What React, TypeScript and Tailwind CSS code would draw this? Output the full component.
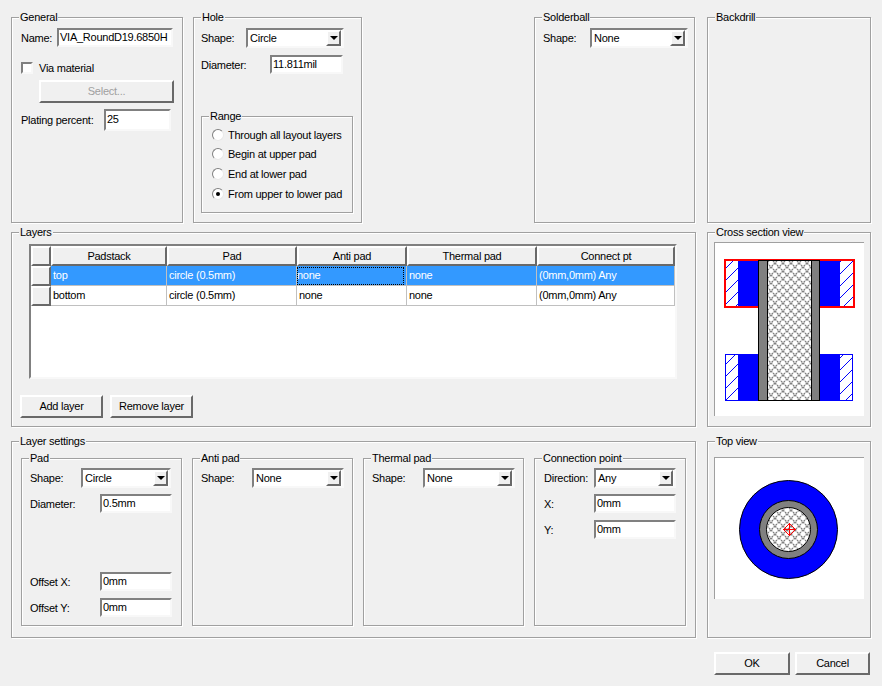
import React from "react";

const sunken = "border-2 border-t-[#808080] border-l-[#808080] border-r-[#f8f8f8] border-b-[#f8f8f8] bg-white";
const raised = "border-2 border-t-white border-l-white border-r-[#696969] border-b-[#696969] bg-[#f0f0f0]";

function Group({ label, className, children }: { label: string; className: string; children?: React.ReactNode }) {
  return (
    <div className={`relative shrink-0 border border-[#a0a0a0] shadow-[1px_1px_0_#fff,inset_1px_1px_0_#fff] ${className}`}>
      <span className="absolute -top-[8px] left-[7px] bg-[#f0f0f0] px-[1px] leading-[14px] whitespace-nowrap">{label}</span>
      {children}
    </div>
  );
}

function TextBox({ value, className }: { value: string; className: string }) {
  return (
    <div className={`${sunken} shrink-0 pl-[1px] leading-[14px] whitespace-nowrap overflow-hidden ${className}`}>{value}</div>
  );
}

function Combo({ value, className }: { value: string; className: string }) {
  return (
    <div className={`${sunken} shrink-0 h-[20px] flex items-center justify-between pl-[2px] pr-[1px] ${className}`}>
      <span>{value}</span>
      <span className={`${raised} w-[15px] h-[16px] flex items-center justify-center border`}>
        <span className="w-0 h-0 border-x-[4px] border-x-transparent border-t-[4px] border-t-black" />
      </span>
    </div>
  );
}

function Radio({ label, checked }: { label: string; checked?: boolean }) {
  return (
    <div className="flex items-center h-[19.67px]">
      <span className="w-[12px] h-[12px] rounded-full border border-t-[#808080] border-l-[#808080] border-r-[#e8e8e8] border-b-[#e8e8e8] bg-white flex items-center justify-center">
        {checked && <span className="w-[4px] h-[4px] rounded-full bg-black" />}
      </span>
      <span className="ml-[4px] whitespace-nowrap">{label}</span>
    </div>
  );
}

function Button({ label, disabled, className }: { label: string; disabled?: boolean; className: string }) {
  return (
    <div className={`${raised} shrink-0 flex items-center justify-center pb-[1px] ${disabled ? "text-[#a0a0a0]" : ""} ${className}`}>{label}</div>
  );
}

const columns = "grid grid-cols-[20px_116px_130px_110px_130px_138px]";

function HeaderCell({ label }: { label?: string }) {
  return <div className={`${raised} h-[20px] flex items-center justify-center pb-[1px]`}>{label}</div>;
}

function Cell({ value, selected, focused }: { value: string; selected?: boolean; focused?: boolean }) {
  return (
    <div className={`h-[20px] border-r border-b border-[#c0c0c0] pl-[2px] flex items-center whitespace-nowrap ${focused ? "" : "pb-[1px]"} ${selected ? "bg-[#3399ff] text-white" : "bg-white"}`}>
      {focused ? (
        <span className="-ml-[2px] w-full h-[18px] pb-[1px] flex items-center outline-1 -outline-offset-1 outline-dotted outline-black">{value}</span>
      ) : (
        value
      )}
    </div>
  );
}

function Row({ name, selected }: { name: string; selected?: boolean }) {
  return (
    <div className={columns}>
      <HeaderCell />
      <Cell value={name} selected={selected} />
      <Cell value="circle (0.5mm)" selected={selected} />
      <Cell value="none" selected={selected} focused={selected} />
      <Cell value="none" selected={selected} />
      <Cell value="(0mm,0mm) Any" selected={selected} />
    </div>
  );
}

function Hatches() {
  const diag = [0, 1, 2, 3, 4, 5, 6, 7, 8, 9, 10, 11];
  return (
    <defs>
      <pattern id="cross" width="8" height="8" patternUnits="userSpaceOnUse">
        <path d="M0 0L8 8M8 0L0 8" stroke="#808080" strokeWidth="1.3" strokeDasharray="2 0.83" fill="none" shapeRendering="auto" />
      </pattern>
      <pattern id="blueDiag" width="12" height="12" patternUnits="userSpaceOnUse">
        {diag.map((i) => (
          <rect key={i} x={i} y={11 - i} width="1" height="1" fill="#0000ff" />
        ))}
      </pattern>
    </defs>
  );
}

// panel content starts at 715,243
function CrossSection() {
  return (
    <svg width="149" height="173" shapeRendering="crispEdges">
      <Hatches />
      <rect x="10" y="111" width="127" height="46" fill="url(#blueDiag)" stroke="#0000ff" />
      <rect x="23" y="111" width="20" height="46" fill="#0000ff" />
      <rect x="105" y="111" width="20" height="46" fill="#0000ff" />
      <rect x="10" y="18" width="129" height="46" fill="url(#blueDiag)" />
      <rect x="23" y="18" width="20" height="46" fill="#0000ff" />
      <rect x="105" y="18" width="20" height="46" fill="#0000ff" />
      <rect x="10" y="17" width="129" height="47" fill="none" stroke="#ff0000" strokeWidth="2" />
      <rect x="43" y="17" width="61" height="140" fill="#808080" stroke="#000000" />
      <rect x="52" y="17" width="44" height="140" fill="#ffffff" stroke="#000000" />
      <rect x="53" y="18" width="43" height="139" fill="url(#cross)" />
    </svg>
  );
}

function TopView() {
  const cx = 73.5;
  const cy = 71.5;
  return (
    <svg width="149" height="141">
      <Hatches />
      <circle cx={cx} cy={cy} r="49" fill="#0000ff" stroke="#000000" />
      <circle cx={cx} cy={cy} r="29" fill="#808080" stroke="#000000" />
      <circle cx={cx} cy={cy} r="22" fill="#ffffff" stroke="#000000" />
      <circle cx={cx} cy={cy} r="21.5" fill="url(#cross)" />
      <path d="M68 71.5h13M74.5 65v13" stroke="#ff0000" fill="none" shapeRendering="crispEdges" />
      <path d="M74.5 65.5l6 6-6 6-6-6z" stroke="#ff0000" fill="none" />
    </svg>
  );
}

export default function App() {
  return (
    <div className="w-[882px] h-[686px] overflow-hidden bg-[#f0f0f0] pt-[17px] pl-[11px] text-[11px] leading-[14px] tracking-[-0.25px] text-black font-['Liberation_Sans',sans-serif]">
      <div className="flex">
        <Group label="General" className="w-[172px] h-[206px]">
          <div className="ml-[9px] mt-[10px] flex items-center">
            <span className="w-[36px]">Name:</span>
            <TextBox value="VIA_RoundD19.6850H" className="w-[116px] h-[19px]" />
          </div>
          <div className="ml-[9px] mt-[15px] flex items-center h-[12px]">
            <span className={`${sunken} w-[12px] h-[12px] border`} />
            <span className="ml-[6px]">Via material</span>
          </div>
          <Button label="Select..." disabled className="ml-[27px] mt-[6px] w-[135px] h-[23px]" />
          <div className="ml-[9px] mt-[6px] flex items-center">
            <span className="w-[83px]">Plating percent:</span>
            <TextBox value="25" className="w-[67px] h-[22px] pt-[1px]" />
          </div>
        </Group>

        <Group label="Hole" className="ml-[10px] w-[169px] h-[206px]">
          <div className="ml-[7px] mt-[10px] flex items-center">
            <span className="w-[45px]">Shape:</span>
            <Combo value="Circle" className="w-[98px]" />
          </div>
          <div className="ml-[7px] mt-[7px] flex items-center">
            <span className="w-[69px]">Diameter:</span>
            <TextBox value="11.811mil" className="w-[73px] h-[19px]" />
          </div>
          <Group label="Range" className="ml-[7px] mt-[42px] w-[152px] h-[97px]">
            <div className="ml-[10px] mt-[8px]">
              <Radio label="Through all layout layers" />
              <Radio label="Begin at upper pad" />
              <Radio label="End at lower pad" />
              <Radio label="From upper to lower pad" checked />
            </div>
          </Group>
        </Group>

        <Group label="Solderball" className="ml-[172px] w-[161px] h-[206px]">
          <div className="ml-[8px] mt-[10px] flex items-center">
            <span className="w-[47px]">Shape:</span>
            <Combo value="None" className="w-[98px]" />
          </div>
        </Group>

        <Group label="Backdrill" className="ml-[12px] w-[164px] h-[206px]" />
      </div>

      <div className="flex mt-[9px]">
        <Group label="Layers" className="w-[685px] h-[195px]">
          <div className={`${sunken} ml-[17px] mt-[11px] w-[648px] h-[135px]`}>
            <div className={columns}>
              <HeaderCell />
              <HeaderCell label="Padstack" />
              <HeaderCell label="Pad" />
              <HeaderCell label="Anti pad" />
              <HeaderCell label="Thermal pad" />
              <HeaderCell label="Connect pt" />
            </div>
            <Row name="top" selected />
            <Row name="bottom" />
          </div>
          <div className="ml-[8px] mt-[16px] flex gap-[7px]">
            <Button label="Add layer" className="w-[83px] h-[23px]" />
            <Button label="Remove layer" className="w-[83px] h-[23px]" />
          </div>
        </Group>

        <Group label="Cross section view" className="ml-[11px] w-[164px] h-[195px]">
          <div className="ml-[6px] mt-[9px] w-[150px] h-[174px] bg-white border-t border-l border-[#a0a0a0]">
            <CrossSection />
          </div>
        </Group>
      </div>

      <div className="flex mt-[14px]">
        <Group label="Layer settings" className="w-[685px] h-[197px] flex">
          <Group label="Pad" className="ml-[9px] mt-[16px] w-[161px] h-[168px]">
            <div className="ml-[8px] mt-[9px] flex items-center">
              <span className="w-[51px]">Shape:</span>
              <Combo value="Circle" className="w-[90px]" />
            </div>
            <div className="ml-[8px] mt-[6px] flex items-center">
              <span className="w-[70px]">Diameter:</span>
              <TextBox value="0.5mm" className="w-[72px] h-[19px]" />
            </div>
            <div className="ml-[8px] mt-[59px] flex items-center">
              <span className="w-[70px]">Offset X:</span>
              <TextBox value="0mm" className="w-[72px] h-[19px]" />
            </div>
            <div className="ml-[8px] mt-[7px] flex items-center">
              <span className="w-[70px]">Offset Y:</span>
              <TextBox value="0mm" className="w-[72px] h-[19px]" />
            </div>
          </Group>

          <Group label="Anti pad" className="ml-[10px] mt-[16px] w-[161px] h-[168px]">
            <div className="ml-[8px] mt-[9px] flex items-center">
              <span className="w-[51px]">Shape:</span>
              <Combo value="None" className="w-[92px]" />
            </div>
          </Group>

          <Group label="Thermal pad" className="ml-[10px] mt-[16px] w-[161px] h-[168px]">
            <div className="ml-[8px] mt-[9px] flex items-center">
              <span className="w-[51px]">Shape:</span>
              <Combo value="None" className="w-[92px]" />
            </div>
          </Group>

          <Group label="Connection point" className="ml-[10px] mt-[16px] w-[152px] h-[168px]">
            <div className="ml-[9px] mt-[9px] flex items-center">
              <span className="w-[50px]">Direction:</span>
              <Combo value="Any" className="w-[82px]" />
            </div>
            <div className="ml-[9px] mt-[6px] flex items-center">
              <span className="w-[50px]">X:</span>
              <TextBox value="0mm" className="w-[82px] h-[19px]" />
            </div>
            <div className="ml-[9px] mt-[7px] flex items-center">
              <span className="w-[50px]">Y:</span>
              <TextBox value="0mm" className="w-[82px] h-[19px]" />
            </div>
          </Group>
        </Group>

        <Group label="Top view" className="ml-[11px] w-[164px] h-[197px]">
          <div className="ml-[6px] mt-[15px] w-[150px] h-[142px] bg-white border-t border-l border-[#a0a0a0]">
            <TopView />
          </div>
        </Group>
      </div>

      <div className="flex justify-end mt-[14px] pr-[12px] gap-[5px]">
        <Button label="OK" className="w-[76px] h-[23px] border-t-[#696969] border-l-[#696969]" />
        <Button label="Cancel" className="w-[75px] h-[23px]" />
      </div>
    </div>
  );
}
